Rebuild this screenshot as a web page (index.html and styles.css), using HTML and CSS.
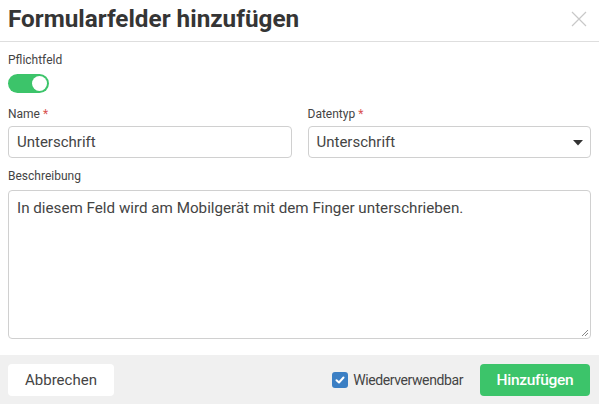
FILE: index.html
```html
<!DOCTYPE html>
<html lang="de">
<head>
<meta charset="utf-8">
<link rel="stylesheet" href="styles.css">
</head>
<body>
<div class="modal">
  <div class="header">
    <h1 class="title">Formularfelder hinzufügen</h1>
    <svg class="close" width="16" height="16" viewBox="0 0 16 16"><path d="M1 1L15 15M15 1L1 15" stroke="#c8c8c8" stroke-width="1.2" fill="none"/></svg>
  </div>
  <div class="content">
    <div class="label">Pflichtfeld</div>
    <div class="toggle"><span class="knob"></span></div>
    <div class="row">
      <div class="col">
        <div class="label">Name <span class="req">*</span></div>
        <div class="input">Unterschrift</div>
      </div>
      <div class="col">
        <div class="label">Datentyp <span class="req">*</span></div>
        <div class="input select">Unterschrift
          <svg class="caret" width="10" height="6" viewBox="0 0 10 6"><path d="M0 0H10L5 5.5Z" fill="#333"/></svg>
        </div>
      </div>
    </div>
    <div class="label desc-label">Beschreibung</div>
    <div class="textarea">In diesem Feld wird am Mobilgerät mit dem Finger unterschrieben.
      <svg class="grip" width="9" height="9" viewBox="0 0 9 9"><path d="M8 2L2 8M8 5L5 8" stroke="#888" stroke-width="1" fill="none"/></svg>
    </div>
  </div>
  <div class="footer">
    <button class="btn cancel">Abbrechen</button>
    <div class="right">
      <label class="check"><span class="box"><svg width="12" height="12" viewBox="0 0 12 12"><path d="M2.5 6.2L5 8.5L9.5 3.5" stroke="#fff" stroke-width="2" fill="none" stroke-linecap="round" stroke-linejoin="round"/></svg></span>Wiederverwendbar</label>
      <button class="btn add">Hinzufügen</button>
    </div>
  </div>
</div>
</body>
</html>
```
FILE: styles.css
```css
* { box-sizing: border-box; }
html, body { margin: 0; padding: 0; background: #fff; }
body { font-family: Roboto, "Liberation Sans", sans-serif; color: #444; }
.modal { width: 599px; height: 404px; display: flex; flex-direction: column; background: #fff; }
.header { height: 42px; border-bottom: 1px solid #dedede; display: flex; align-items: center; justify-content: space-between; padding: 0 12px 0 8px; }
.title { margin: 0; font-size: 24.3px; font-weight: 700; color: #353535; line-height: 30px; padding-bottom: 4px; }
.close { margin-top: -4px; }
.content { padding: 10px 8px 0 8px; flex: 1; }
.label { font-size: 12px; line-height: 16px; color: #444; }
.req { color: #d9534f; }
.toggle { width: 41px; height: 19px; border-radius: 10px; background: #3cc46a; margin-top: 6px; position: relative; }
.knob { position: absolute; right: 2px; top: 2px; width: 15px; height: 15px; border-radius: 50%; background: #fff; }
.row { display: flex; gap: 16px; margin-top: 13px; }
.col { flex: 1; }
.input { margin-top: 4px; height: 32px; border: 1px solid #d0d0d0; border-radius: 4px; padding: 0 8px; font-size: 15px; line-height: 30px; color: #444; position: relative; }
.select .caret { position: absolute; right: 7px; top: 13px; }
.desc-label { margin-top: 10px; }
.textarea { margin-top: 6px; height: 149px; border: 1px solid #d0d0d0; border-radius: 4px; padding: 7px 8px; font-size: 15.2px; line-height: 20px; color: #444; position: relative; }
.grip { position: absolute; right: 1px; bottom: 1px; }
.footer { height: 49px; background: #f0f0f0; display: flex; align-items: center; justify-content: space-between; padding: 0 9px 0 8px; }
.btn { font-family: Roboto, "Liberation Sans", sans-serif; height: 32px; border: none; border-radius: 4px; font-size: 15px; padding: 0; cursor: pointer; }
.cancel { width: 106px; background: #fff; color: #444; }
.right { display: flex; align-items: center; gap: 17px; }
.check { display: flex; align-items: center; gap: 5px; font-size: 14px; letter-spacing: -0.4px; color: #444; }
.box { width: 16px; height: 16px; border-radius: 3px; background: #3b7fc4; display: flex; align-items: center; justify-content: center; }
.add { width: 110px; background: #3cc46a; color: #fff; font-weight: 500; font-size: 15.5px; letter-spacing: -0.3px; }
```
